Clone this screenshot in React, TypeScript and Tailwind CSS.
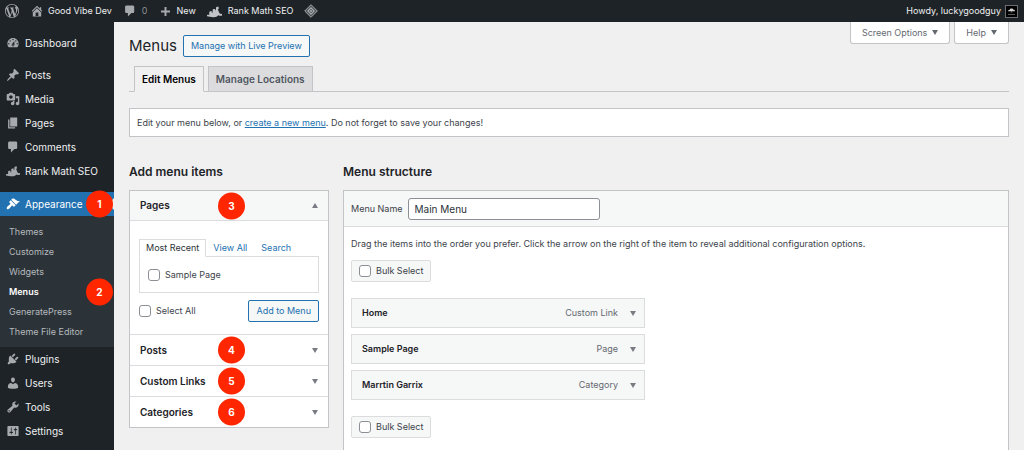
import React, { useState } from "react";
import clsx from "clsx";

// 20x20 admin icon set
const ICONS = {
    wordpress: "M20 10c0-5.51-4.49-10-10-10C4.48 0 0 4.49 0 10c0 5.52 4.48 10 10 10 5.51 0 10-4.48 10-10zM7.78 15.37L4.37 6.22c.55-.02 1.17-.08 1.17-.08.5-.06.44-1.13-.06-1.11 0 0-1.45.11-2.37.11-.18 0-.37 0-.58-.01C4.12 2.69 6.87 1.11 10 1.11c2.33 0 4.45.87 6.05 2.34-.68-.11-1.65.39-1.65 1.58 0 .74.45 1.36.9 2.1.35.61.55 1.36.55 2.46 0 1.49-1.4 5-1.4 5l-3.03-8.37c.54-.02.82-.17.82-.17.5-.05.44-1.25-.06-1.22 0 0-1.44.12-2.38.12-.87 0-2.33-.12-2.33-.12-.5-.03-.56 1.2-.06 1.22l.92.08 1.26 3.41zM17.41 10c.24-.64.74-1.87.43-4.25.7 1.29 1.05 2.71 1.05 4.25 0 3.29-1.73 6.24-4.4 7.78.97-2.59 1.94-5.2 2.92-7.78zM6.1 18.09C3.12 16.65 1.11 13.53 1.11 10c0-1.3.23-2.48.72-3.59C3.25 10.3 4.67 14.2 6.1 18.09zm4.03-6.63l2.58 6.98c-.86.29-1.76.45-2.71.45-.79 0-1.57-.11-2.29-.33.81-2.38 1.62-4.74 2.42-7.1z",
    home: "M16 8.5l1.53 1.53-1.06 1.06L10 4.6l-6.47 6.49-1.06-1.06L10 2.5l4 4v-2h2v4zm-6-2.46l6 5.99V18H4v-5.97zM12 17v-5H8v5h4z",
    plus: "M17 8.5v3h-5.5V17h-3v-5.5H3v-3h5.5V3h3v5.5H17z",
    dashboard: "M3.76 16h12.48c1.1-1.37 1.76-3.11 1.76-5 0-4.42-3.58-8-8-8s-8 3.58-8 8c0 1.89.66 3.63 1.76 5zM10 4c.55 0 1 .45 1 1s-.45 1-1 1-1-.45-1-1 .45-1 1-1zM6 6c.55 0 1 .45 1 1s-.45 1-1 1-1-.45-1-1 .45-1 1-1zm8 0c.55 0 1 .45 1 1s-.45 1-1 1-1-.45-1-1 .45-1 1-1zm-5.37 5.55L12 7v6c0 1.1-.9 2-2 2s-2-.9-2-2c0-.57.24-1.08.63-1.45zM4 10c.55 0 1 .45 1 1s-.45 1-1 1-1-.45-1-1 .45-1 1-1zm12 0c.55 0 1 .45 1 1s-.45 1-1 1-1-.45-1-1 .45-1 1-1zm-5 3c0-.55-.45-1-1-1s-1 .45-1 1 .45 1 1 1 1-.45 1-1z",
    post: "M10.44 3.02l1.82-1.82 6.36 6.35-1.83 1.82c-1.05-.68-2.48-.57-3.41.36l-.75.75c-.92.93-1.04 2.35-.35 3.41l-1.83 1.82-2.41-2.41-2.8 2.79c-.42.42-3.38 2.71-3.8 2.29s1.86-3.39 2.28-3.81l2.79-2.79L4.1 9.36l1.83-1.82c1.05.69 2.48.57 3.4-.36l.75-.75c.93-.92 1.05-2.35.36-3.41z",
    media: "M13 11V4c0-.55-.45-1-1-1h-1.67L9 1H5L3.67 3H2c-.55 0-1 .45-1 1v7c0 .55.45 1 1 1h10c.55 0 1-.45 1-1zM7 4.5c1.38 0 2.5 1.12 2.5 2.5S8.38 9.5 7 9.5 4.5 8.38 4.5 7 5.62 4.5 7 4.5zM14 6h5v10.5c0 1.38-1.12 2.5-2.5 2.5S14 17.88 14 16.5s1.12-2.5 2.5-2.5c.17 0 .34.02.5.05V9h-3V6zm-4 8.05V13h2v3.5c0 1.38-1.12 2.5-2.5 2.5S7 17.88 7 16.5 8.12 14 9.5 14c.17 0 .34.02.5.05z",
    page: "M6 15V2h10v13H6zm-1 1h8v2H3V5h2v11z",
    comments: "M5 2h9c1.1 0 2 .9 2 2v7c0 1.1-.9 2-2 2h-2l-5 5v-5H5c-1.1 0-2-.9-2-2V4c0-1.1.9-2 2-2z",
    rankmath: "M0 14.500c1.200-.3 2.200-.2 3 .2V10.500l1.200-1h2.300V12l1-.7V7.500l1.200-1h2.300v2.300l1-.9V4.500l1.300-1h2.200V7l-1.300-.4 2.300 5.400 1.500 1.300 2-.3v2.500c-2.300.4-3.500.2-4.700-.6-1.600 1.600-3.700 2.600-6 2.600-3.800.2-6.200-.6-9.300-1.200z",
    appearance: "M14.48 11.06L7.41 3.99l1.5-1.5c.5-.56 2.3-.47 3.51.32 1.21.8 1.43 1.28 2.91 2.1 1.18.64 2.45 1.26 4.45.85zm-.71.71L6.7 4.7 4.93 6.47c-.39.39-.39 1.02 0 1.41l1.06 1.06c.39.39.39 1.03 0 1.42-.6.6-1.43 1.11-2.21 1.69-.35.26-.7.53-1.01.84C1.43 14.23.4 16.08 1.4 17.07c.99 1 2.84-.03 4.18-1.36.31-.31.58-.66.85-1.02.57-.78 1.08-1.61 1.69-2.21.39-.39 1.02-.39 1.41 0l1.06 1.06c.39.39 1.02.39 1.41 0z",
    plugins: "M13.11 4.36L9.87 7.6 8 5.73l3.24-3.24c.35-.34 1.05-.2 1.56.32.52.51.66 1.21.31 1.55zm-8 1.77l.91-1.12 9.01 9.01-1.19.84c-.71.71-2.63 1.16-3.82 1.16H6.14L4.9 17.26c-.59.59-1.54.59-2.12 0-.59-.58-.59-1.53 0-2.12l1.24-1.24v-3.88c0-1.13.4-3.19 1.09-3.89zm7.26 3.97l3.24-3.24c.34-.35 1.04-.21 1.55.31.52.51.66 1.21.31 1.55l-3.24 3.25z",
    users: "M10 9.25c-2.27 0-2.73-3.44-2.73-3.44C7 4.02 7.82 2 9.97 2c2.16 0 2.98 2.02 2.71 3.81 0 0-.41 3.44-2.68 3.44zm0 2.57L12.72 10c2.39 0 4.52 2.33 4.52 4.53v2.49s-3.65 1.13-7.24 1.13c-3.65 0-7.24-1.13-7.24-1.13v-2.49c0-2.25 1.94-4.48 4.47-4.48z",
    tools: "M16.68 9.77c-1.34 1.34-3.3 1.67-4.95.99l-5.41 6.52c-.99.99-2.59.99-3.58 0s-.99-2.59 0-3.57l6.52-5.42c-.68-1.65-.35-3.61.99-4.95 1.28-1.28 3.12-1.62 4.72-1.06l-2.89 2.89 2.82 2.82 2.86-2.87c.53 1.58.18 3.39-1.08 4.65zM3.81 16.21c.4.39 1.04.39 1.43 0 .4-.4.4-1.04 0-1.43-.39-.4-1.03-.4-1.43 0-.39.39-.39 1.03 0 1.43z",
    settings: "M18 16V4c0-.55-.45-1-1-1H3c-.55 0-1 .45-1 1v12c0 .55.45 1 1 1h14c.55 0 1-.45 1-1zM8 11h1c.55 0 1 .45 1 1s-.45 1-1 1H8v1.5c0 .28-.22.5-.5.5s-.5-.22-.5-.5V13H6c-.55 0-1-.45-1-1s.45-1 1-1h1V5.5c0-.28.22-.5.5-.5s.5.22.5.5V11zm5-2h-1c-.55 0-1-.45-1-1s.45-1 1-1h1V5.5c0-.28.22-.5.5-.5s.5.22.5.5V7h1c.55 0 1 .45 1 1s-.45 1-1 1h-1v5.500c0 .28-.22.5-.5.5s-.5-.22-.5-.5V9z",
};

type IconName = keyof typeof ICONS;

type NavItem = { label: string; icon: IconName };

const topNav: NavItem[] = [
    { label: "Posts", icon: "post" },
    { label: "Media", icon: "media" },
    { label: "Pages", icon: "page" },
    { label: "Comments", icon: "comments" },
    { label: "Rank Math SEO", icon: "rankmath" },
];

const subNav = ["Themes", "Customize", "Widgets", "Menus", "GeneratePress", "Theme File Editor"];

const bottomNav: NavItem[] = [
    { label: "Plugins", icon: "plugins" },
    { label: "Users", icon: "users" },
    { label: "Tools", icon: "tools" },
    { label: "Settings", icon: "settings" },
];

const closedSections = [
    { title: "Posts", step: 4 },
    { title: "Custom Links", step: 5 },
    { title: "Categories", step: 6 },
];

const menuItems = [
    { title: "Home", type: "Custom Link" },
    { title: "Sample Page", type: "Page" },
    { title: "Marrtin Garrix", type: "Category" },
];

function Icon({ name, className = "size-[14px]" }: { name: IconName; className?: string }) {
    return (
        <svg viewBox="0 0 20 20" fill="currentColor" fillRule="evenodd" className={clsx("shrink-0", className)} aria-hidden="true">
            <path d={ICONS[name]} />
        </svg>
    );
}

function Arrow({ up = false, className = "text-[#787c82]" }: { up?: boolean; className?: string }) {
    return (
        <svg viewBox="0 0 6 5" fill="currentColor" className={clsx("h-[5px] w-[6px] shrink-0", className)} aria-hidden="true">
            <path d={up ? "M3 0l3 5H0z" : "M3 5l3-5H0z"} />
        </svg>
    );
}

/* Red numbered step marker, sits over the row it belongs to */
function Step({ n, className }: { n: number; className: string }) {
    return (
        <span
            className={clsx(
                "absolute top-1/2 flex size-[27px] -translate-y-1/2 items-center justify-center rounded-full bg-[#ff2600] text-[10px] font-bold text-white",
                className
            )}
        >
            {n}
        </span>
    );
}

function NavLink({ item }: { item: NavItem }) {
    return (
        <a href="#" className="flex h-6 items-center gap-[5px] pl-[6px] text-[10px] text-[#f0f0f1]">
            <Icon name={item.icon} className="size-[14px] text-[#a7aaad]" />
            {item.label}
        </a>
    );
}

function Checkbox({ label, className }: { label: string; className?: string }) {
    return (
        <label className={clsx("inline-flex items-center gap-[5px]", className)}>
            <input
                type="checkbox"
                className="size-3 shrink-0 appearance-none rounded-[3px] border border-[#8c8f94] bg-white checked:bg-[#2271b1]"
            />
            {label}
        </label>
    );
}

function BulkSelect() {
    return <Checkbox label="Bulk Select" className="h-[22px] rounded-[2px] border border-[#dcdcde] bg-[#f6f7f7] px-[7px]" />;
}

function AdminBar() {
    return (
        <header className="flex h-[22px] items-center bg-[#1d2327] pl-[5px] pr-[6px] text-[9px] text-[#f0f0f1]">
            <a href="#" aria-label="WordPress">
                <Icon name="wordpress" className="size-[14px] text-[#a7aaad]" />
            </a>
            <a href="#" className="ml-[11px] flex items-center gap-1">
                <Icon name="home" className="size-[14px] text-[#a7aaad]" />
                Good Vibe Dev
            </a>
            <a href="#" className="ml-[11px] flex items-center gap-[5px] text-[#8c8f94]">
                <Icon name="comments" className="size-[14px] text-[#a7aaad]" />0
            </a>
            <a href="#" className="ml-[11px] flex items-center gap-[5px]">
                <Icon name="plus" className="size-[13px] text-[#a7aaad]" />
                New
            </a>
            <a href="#" className="ml-[11px] flex items-center gap-[6px]">
                <Icon name="rankmath" className="size-[15px] text-[#c3c4c7]" />
                Rank Math SEO
            </a>
            <a href="#" aria-label="Site kit" className="ml-[11px]">
                <svg viewBox="0 0 20 20" className="size-[14px]" aria-hidden="true">
                    <path d="M10 1l9 9-9 9-9-9z" fill="#50575e" stroke="#a7aaad" strokeWidth="1.4" />
                    <path d="M10 5.500l4.500 4.500-4.500 4.500L5.500 10z" fill="none" stroke="#a7aaad" strokeWidth="1.600" />
                    <circle cx="10" cy="10" r="1.500" fill="#a7aaad" />
                </svg>
            </a>
            <a href="#" className="ml-auto flex items-center gap-1">
                Howdy, luckygoodguy
                <svg viewBox="0 0 13 13" className="size-[13px]" aria-hidden="true">
                    <rect x="0.5" y="0.5" width="12" height="12" fill="#000" stroke="#6c7075" />
                    <path d="M3 6.200c0-1 .8-1.300 1.600-1.300.2-.9 1-1.400 1.900-1.400s1.600.5 1.900 1.300c.9 0 1.600.5 1.600 1.400z" fill="#d5d5d5" />
                    <path d="M5.800 6h1.400v1.600H5.800zM3 9h7v.8H3z" fill="#777" />
                </svg>
            </a>
        </header>
    );
}

function Sidebar() {
    return (
        <nav className="w-[114px] shrink-0 bg-[#1d2327] pt-[9px]">
            <NavLink item={{ label: "Dashboard", icon: "dashboard" }} />
            <div className="mt-2">
                {topNav.map((item) => (
                    <NavLink key={item.label} item={item} />
                ))}
            </div>

            <div className="relative mt-[9px]">
                <a href="#" className="flex h-6 items-center gap-[5px] bg-[#2271b1] pl-[6px] text-[10px] text-white">
                    <Icon name="appearance" />
                    Appearance
                </a>
                <svg viewBox="0 0 6 12" className="absolute right-0 top-[6px] h-3 w-[6px] text-[#f0f0f1]" aria-hidden="true">
                    <path d="M6 0v12L0 6z" fill="currentColor" />
                </svg>
                <Step n={1} className="right-[1px]" />
            </div>
            <div className="bg-[#2c3338] pb-[5px] pt-1.5">
                {subNav.map((label) => (
                    <div key={label} className="relative">
                        <a
                            href="#"
                            className={clsx(
                                "flex h-5 items-center pl-[9px] text-[9px]",
                                label === "Menus" ? "font-semibold text-white" : "text-[#b4b9be]"
                            )}
                        >
                            {label}
                        </a>
                        {label === "Menus" && <Step n={2} className="right-[1px]" />}
                    </div>
                ))}
            </div>
            {bottomNav.map((item) => (
                <NavLink key={item.label} item={item} />
            ))}
        </nav>
    );
}

function AddMenuItems() {
    const [tab, setTab] = useState("Most Recent");

    return (
        <section className="w-[200px] shrink-0">
            <h2 className="text-xs leading-4 font-semibold text-[#1d2327]">Add menu items</h2>
            <div className="mt-[10px] border border-[#c3c4c7] bg-white">
                <h3 className="relative border-b border-[#dcdcde] bg-[#f6f7f7]">
                    <button type="button" className="flex h-[29px] w-full items-center justify-between px-[10px] text-[10px] font-semibold text-[#1d2327]">
                        Pages
                        <Arrow up />
                    </button>
                    <Step n={3} className="left-[88px]" />
                </h3>
                <div className="px-[9px] pb-3 pt-[18px]">
                    <div className="flex text-[9px]">
                        {["Most Recent", "View All", "Search"].map((name) => (
                            <button
                                key={name}
                                type="button"
                                onClick={() => setTab(name)}
                                className={clsx(
                                    "-mb-px h-[18px] border px-1.5",
                                    tab === name ? "border-[#dcdcde] border-b-white bg-white text-[#2c3338]" : "border-transparent text-[#2271b1]"
                                )}
                            >
                                {name}
                            </button>
                        ))}
                    </div>
                    <div className="flex h-[37px] items-center border border-[#dcdcde] pl-2">
                        <Checkbox label="Sample Page" />
                    </div>
                    <div className="mt-[7px] flex items-center justify-between">
                        <Checkbox label="Select All" />
                        <button type="button" className="h-[22px] rounded-[2px] border border-[#2271b1] bg-[#f6f7f7] px-[7px] text-[#2271b1]">
                            Add to Menu
                        </button>
                    </div>
                </div>
                {closedSections.map((s) => (
                    <h3 key={s.title} className="relative border-t border-[#dcdcde]">
                        <button type="button" className="flex h-[30px] w-full items-center justify-between px-[10px] text-[10px] font-semibold text-[#1d2327]">
                            {s.title}
                            <Arrow />
                        </button>
                        <Step n={s.step} className="left-[88px]" />
                    </h3>
                ))}
            </div>
        </section>
    );
}

function MenuStructure() {
    return (
        <section className="flex flex-1 flex-col">
            <h2 className="text-xs leading-4 font-semibold text-[#1d2327]">Menu structure</h2>
            <div className="mt-[10px] flex-1 border border-b-0 border-[#c3c4c7] bg-white">
                <div className="flex h-9 items-center gap-[5px] border-b border-[#dcdcde] bg-[#f6f7f7] pl-[7px]">
                    <label htmlFor="menu-name">Menu Name</label>
                    <input
                        id="menu-name"
                        defaultValue="Main Menu"
                        className="h-[22px] w-48 rounded-[3px] border border-[#8c8f94] bg-white px-1.5 text-[10px] text-[#2c3338]"
                    />
                </div>
                <div className="px-[7px] pt-[9px]">
                    <p className="leading-4">
                        Drag the items into the order you prefer. Click the arrow on the right of the item to reveal additional configuration options.
                    </p>
                    <div className="mt-2 flex">
                        <BulkSelect />
                    </div>
                    <ul className="my-4 flex max-w-[294px] flex-col gap-[6px]">
                        {menuItems.map((item) => (
                            <li key={item.title} className="flex h-[30px] items-center border border-[#dcdcde] bg-[#f6f7f7] pl-[10px] pr-2">
                                <span className="flex-1 font-semibold text-[#1d2327]">{item.title}</span>
                                <span className="text-[9px] text-[#646970]">{item.type}</span>
                                <button type="button" aria-label={`Edit ${item.title}`} className="ml-3">
                                    <Arrow />
                                </button>
                            </li>
                        ))}
                    </ul>
                    <BulkSelect />
                </div>
            </div>
        </section>
    );
}

export default function App() {
    return (
        <div className="flex min-h-screen flex-col bg-[#f0f0f1] font-['Inter','Liberation_Sans',sans-serif] text-[9px] text-[#3c434a]">
            <AdminBar />
            <div className="flex flex-1">
                <Sidebar />
                <main className="flex flex-1 flex-col pl-[15px] pr-[15px]">
                    <div className="flex items-start justify-between">
                        <div className="flex items-center gap-[6px] pt-[13px]">
                            <h1 className="text-[15px] leading-[22px] text-[#1d2327]">Menus</h1>
                            <a href="#" className="flex h-[22px] items-center rounded-[2px] border border-[#2271b1] bg-[#f6f7f7] px-[7px] text-[#2271b1]">
                                Manage with Live Preview
                            </a>
                        </div>
                        <div className="flex gap-1 text-[#646970]">
                            {["Screen Options", "Help"].map((label) => (
                                <button
                                    key={label}
                                    type="button"
                                    className="flex h-[22px] items-center gap-[5px] rounded-b-[3px] border border-t-0 border-[#c3c4c7] bg-white px-[11px]"
                                >
                                    {label}
                                    <Arrow className="text-[#646970]" />
                                </button>
                            ))}
                        </div>
                    </div>

                    <nav className="mt-[9px] flex gap-1 border-b border-[#c3c4c7] pl-[5px] text-[10px] font-semibold">
                        <a href="#" className="-mb-px flex h-[26px] items-center border border-[#c3c4c7] border-b-[#f0f0f1] bg-[#f0f0f1] px-[7px] text-black">
                            Edit Menus
                        </a>
                        <a href="#" className="flex h-[25px] items-center border border-b-0 border-[#c3c4c7] bg-[#dcdcde] px-[7px] text-[#50575e]">
                            Manage Locations
                        </a>
                    </nav>

                    <div className="mt-4 flex h-[29px] items-center border border-[#c3c4c7] bg-white px-[7px]">
                        <p>
                            Edit your menu below, or{" "}
                            <a href="#" className="text-[#2271b1] underline">
                                create a new menu
                            </a>
                            . Do not forget to save your changes!
                        </p>
                    </div>

                    <div className="mt-[27px] flex flex-1 gap-[14px]">
                        <AddMenuItems />
                        <MenuStructure />
                    </div>
                </main>
            </div>
        </div>
    );
}
